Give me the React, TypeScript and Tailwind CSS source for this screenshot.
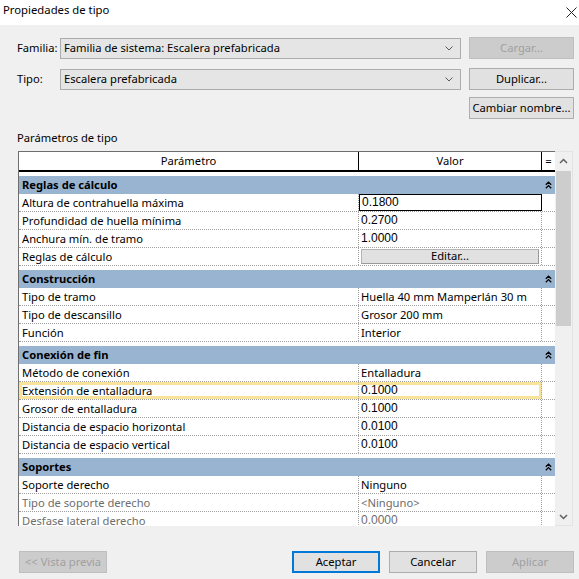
import clsx from 'clsx';

type Item = {
  label: string;
  value?: string;
  num?: boolean;
  focused?: boolean;
  button?: string;
  highlight?: boolean;
  disabled?: boolean;
};

type Section = { title: string; items: Item[] };

const sections: Section[] = [
  {
    title: 'Reglas de cálculo',
    items: [
      { label: 'Altura de contrahuella máxima', value: '0.1800', num: true, focused: true },
      { label: 'Profundidad de huella mínima', value: '0.2700', num: true },
      { label: 'Anchura mín. de tramo', value: '1.0000', num: true },
      { label: 'Reglas de cálculo', button: 'Editar...' },
    ],
  },
  {
    title: 'Construcción',
    items: [
      { label: 'Tipo de tramo', value: 'Huella 40 mm Mamperlán 30 m' },
      { label: 'Tipo de descansillo', value: 'Grosor 200 mm' },
      { label: 'Función', value: 'Interior' },
    ],
  },
  {
    title: 'Conexión de fin',
    items: [
      { label: 'Método de conexión', value: 'Entalladura' },
      { label: 'Extensión de entalladura', value: '0.1000', num: true, highlight: true },
      { label: 'Grosor de entalladura', value: '0.1000', num: true },
      { label: 'Distancia de espacio horizontal', value: '0.0100', num: true },
      { label: 'Distancia de espacio vertical', value: '0.0100', num: true },
    ],
  },
  {
    title: 'Soportes',
    items: [
      { label: 'Soporte derecho', value: 'Ninguno' },
      { label: 'Tipo de soporte derecho', value: '<Ninguno>', disabled: true },
      { label: 'Desfase lateral derecho', value: '0.0000', num: true, disabled: true },
    ],
  },
];

// Segoe UI stand-in: Noto Sans at a slightly smaller size has about the same widths
const UI = "font-['Noto_Sans','Open_Sans',sans-serif]";
const NUM = "font-['Liberation_Sans',Arial,sans-serif] text-[12px]";

const ComboChevron = () => (
  <svg width="8" height="5" viewBox="0 0 8 5" className="shrink-0">
    <path d="M0.5 0.5 L4 4 L7.5 0.5" fill="none" stroke="#5a5a5a" strokeWidth="1" />
  </svg>
);

const DoubleUp = () => (
  <svg width="7" height="8" viewBox="0 0 7 8">
    <path d="M0.8 3.8 L3.5 1.2 L6.2 3.8 M0.8 7.2 L3.5 4.6 L6.2 7.2" fill="none" stroke="#000" strokeWidth="1.3" />
  </svg>
);

const Btn = ({ label, disabled, primary, w = 'w-[105px]' }: { label: string; disabled?: boolean; primary?: boolean; w?: string }) => (
  <div
    className={clsx(
      'flex h-[22px] items-center justify-center whitespace-nowrap',
      w,
      disabled
        ? 'border border-[#bfbfbf] bg-[#cccccc] text-[#a0a0a0]'
        : primary
          ? 'border-2 border-[#0078d7] bg-[#e1e1e1] text-black'
          : 'border border-[#adadad] bg-[#e1e1e1] text-black',
    )}
  >
    {label}
  </div>
);

const Combo = ({ text }: { text: string }) => (
  <div className="flex h-[21px] flex-1 items-center justify-between border border-[#acacac] bg-[#e5e5e5] pl-[3px] pr-[7px]">
    <span>{text}</span>
    <ComboChevron />
  </div>
);

function Row({ item }: { item: Item }) {
  const txt = item.disabled ? 'text-[#6d6d6d]' : 'text-black';
  return (
    <div className="flex h-[18px] border-b border-dotted border-[#a0a0a0]">
      <div className={clsx('flex', item.highlight && 'shadow-[inset_0_0_0_3px_#f9e29a]')}>
        <div className={clsx('flex w-[340px] items-center whitespace-nowrap border-r border-dotted border-[#a0a0a0] pl-[3px] leading-[17px]', txt)}>
          {item.label}
        </div>
        {item.button ? (
          <div className="flex w-[183px] items-stretch border-r border-dotted border-[#a0a0a0] px-[2px] py-[1px]">
            <div className="flex flex-1 items-center justify-center border border-[#b4b4b4] border-b-[#9a9a9a] border-r-[#9a9a9a] bg-[#e1e1e1]">
              {item.button}
            </div>
          </div>
        ) : (
          <div
            className={clsx(
              'flex w-[183px] items-center whitespace-nowrap pl-[2px] leading-[17px]',
              item.focused ? 'border border-black' : 'border-r border-dotted border-[#a0a0a0]',
              item.num && NUM,
              txt,
            )}
          >
            {item.value}
          </div>
        )}
      </div>
      <div className="w-[13px]" />
    </div>
  );
}

export default function App() {
  return (
    <div className={clsx('h-[579px] w-[579px] overflow-hidden bg-[#f0f0f0] text-[11.2px] text-black', UI)}>
      {/* title bar */}
      <div className="flex h-[25px] items-start justify-between bg-white pl-[3px] pr-[2px]">
        <span className="mt-[1px] text-[11.3px] leading-[18px]">Propiedades de tipo</span>
        <svg width="11" height="11" viewBox="0 0 11 11" className="mt-[7px]">
          <path d="M0.5 0.5 L10.5 10.5 M10.5 0.5 L0.5 10.5" stroke="#222" strokeWidth="1" />
        </svg>
      </div>

      {/* familia / tipo */}
      <div className="flex flex-col pl-[17px] pr-[5px] pt-[12px]">
        <div className="flex h-[22px] items-center">
          <span className="w-[43px]">Familia:</span>
          <Combo text="Familia de sistema: Escalera prefabricada" />
          <div className="ml-[8px]">
            <Btn label="Cargar..." disabled />
          </div>
        </div>
        <div className="mt-[9px] flex h-[22px] items-center">
          <span className="w-[43px]">Tipo:</span>
          <Combo text="Escalera prefabricada" />
          <div className="ml-[8px]">
            <Btn label="Duplicar..." />
          </div>
        </div>
        <div className="mt-[7px] flex justify-end">
          <Btn label="Cambiar nombre..." />
        </div>
      </div>

      <div className="mt-[11px] pl-[17px] leading-[16px]">Parámetros de tipo</div>

      {/* table */}
      <div className="ml-[18px] mt-[5px] flex h-[375px] w-[555px]">
        <div className="flex-1 overflow-hidden border-l border-t border-[#6e6e6e] bg-white">
          <div className="flex h-[20px] border-b-2 border-black">
            <div className="flex w-[340px] items-center justify-center border-r border-black">Parámetro</div>
            <div className="flex w-[183px] items-center justify-center border-r border-black">Valor</div>
            <div className="flex w-[13px] items-center justify-center">=</div>
          </div>
          {sections.map((s) => (
            <div key={s.title}>
              <div className="mt-[4px] flex h-[18px] items-center bg-[#99b4d1]">
                <span className="flex-1 pl-[3px] font-bold">{s.title}</span>
                <span className="flex w-[13px] justify-center">
                  <DoubleUp />
                </span>
              </div>
              {s.items.map((it) => (
                <Row key={it.label} item={it} />
              ))}
            </div>
          ))}
        </div>

        {/* scrollbar */}
        <div className="flex w-[18px] flex-col border border-l-0 border-[#e3e3e3] bg-[#f0f0f0]">
          <div className="flex h-[17px] items-center justify-center">
            <svg width="9" height="6" viewBox="0 0 9 6">
              <path d="M1 5 L4.5 1.5 L8 5" fill="none" stroke="#606060" strokeWidth="1.5" />
            </svg>
          </div>
          <div className="mx-[1px] mt-[2px] h-[155px] bg-[#cdcdcd]" />
          <div className="flex-1" />
          <div className="flex h-[17px] items-center justify-center">
            <svg width="9" height="6" viewBox="0 0 9 6">
              <path d="M1 1 L4.5 4.5 L8 1" fill="none" stroke="#606060" strokeWidth="1.5" />
            </svg>
          </div>
        </div>
      </div>

      {/* bottom buttons */}
      <div className="mt-[25px] flex items-center justify-between pl-[19px] pr-[5px]">
        <Btn label="<< Vista previa" disabled w="w-[88px]" />
        <div className="flex gap-[9px]">
          <Btn label="Aceptar" primary w="w-[88px]" />
          <Btn label="Cancelar" w="w-[88px]" />
          <Btn label="Aplicar" disabled w="w-[88px]" />
        </div>
      </div>
    </div>
  );
}
